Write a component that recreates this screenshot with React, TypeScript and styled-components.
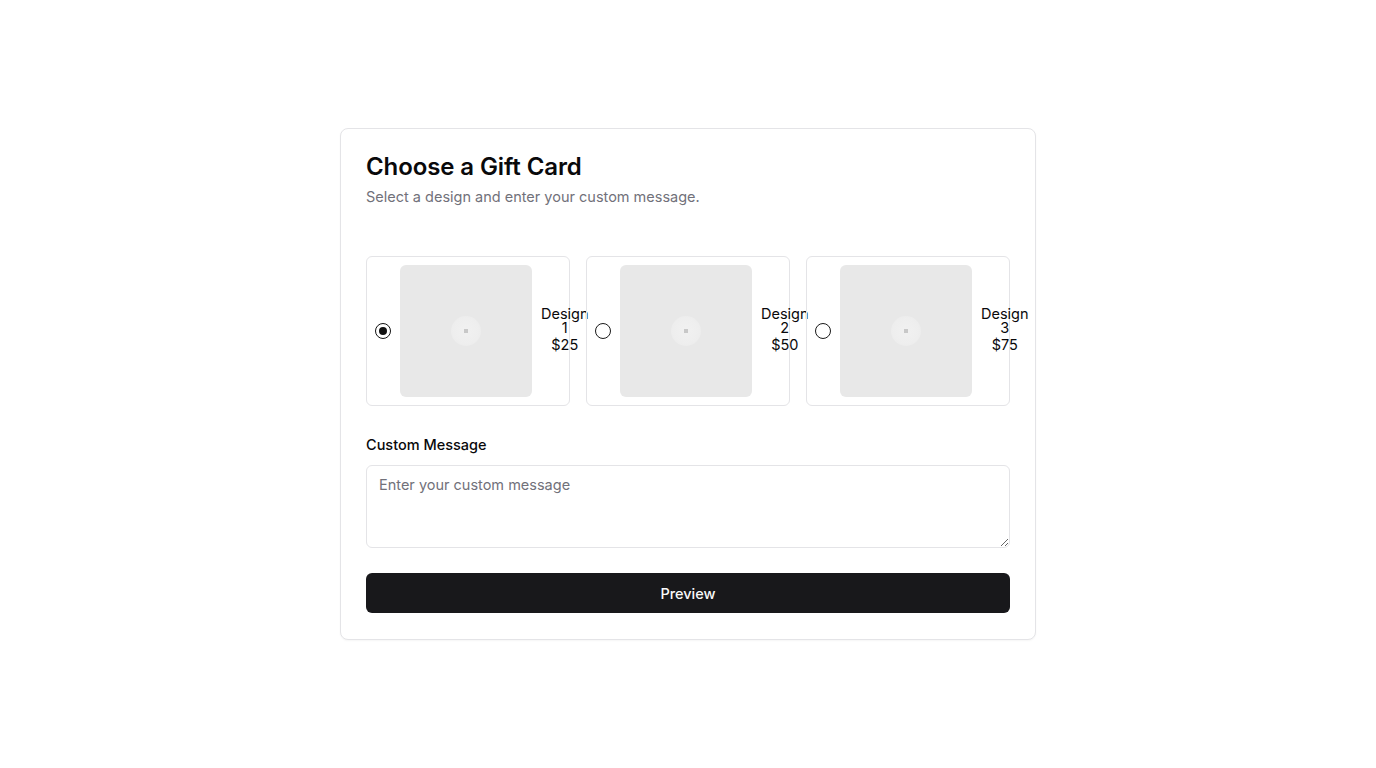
import React, { useState } from "react";
import styled, { createGlobalStyle } from "styled-components";

const GlobalStyle = createGlobalStyle`
  * { box-sizing: border-box; }
  html, body { margin: 0; padding: 0; background: #ffffff; }
  body { font-family: Inter, "Noto Sans", "Liberation Sans", sans-serif; color: #09090b; }
`;

const Page = styled.div`
  min-height: 100vh;
  display: flex;
  align-items: center;
  justify-content: center;
`;

const Card = styled.div`
  width: 696px;
  border: 1px solid #e4e4e7;
  border-radius: 8px;
  background: #fff;
  box-shadow: 0 1px 2px rgba(0, 0, 0, 0.04);
  padding: 26px 25px 26px 25px;
  display: flex;
  flex-direction: column;
`;

const Header = styled.div`
  display: flex;
  flex-direction: column;
  gap: 8px;
  padding-bottom: 49px;
`;

const Title = styled.h2`
  margin: 0;
  font-size: 24px;
  line-height: 24px;
  font-weight: 600;
  letter-spacing: -0.1px;
  color: #09090b;
`;

const Subtitle = styled.p`
  margin: 0;
  font-size: 14.5px;
  line-height: 20px;
  color: #71717a;
`;

const Options = styled.div`
  display: grid;
  grid-template-columns: repeat(3, 1fr);
  gap: 16px;
`;

const Option = styled.label`
  display: flex;
  align-items: center;
  gap: 9px;
  padding: 8px;
  border: 1px solid #e4e4e7;
  border-radius: 6px;
  cursor: pointer;
  min-width: 0;
`;

const Radio = styled.span<{ $checked: boolean }>`
  flex-shrink: 0;
  width: 16px;
  height: 16px;
  border-radius: 50%;
  border: ${(p) => (p.$checked ? "1.5px solid #111" : "1.3px solid #1a1a1a")};
  display: flex;
  align-items: center;
  justify-content: center;
  &::after {
    content: "";
    width: 8px;
    height: 8px;
    border-radius: 50%;
    background: #111;
    display: ${(p) => (p.$checked ? "block" : "none")};
  }
`;

const Thumb = styled.div`
  flex-shrink: 0;
  width: 132px;
  height: 132px;
  border-radius: 6px;
  background: #e8e8e8;
  display: flex;
  align-items: center;
  justify-content: center;
`;

const ThumbGlow = styled.div`
  width: 30px;
  height: 30px;
  border-radius: 50%;
  background: radial-gradient(circle, #f1f1f1 0%, #eeeeee 60%, #e9e9e9 100%);
  display: flex;
  align-items: center;
  justify-content: center;
  &::after {
    content: "";
    width: 4px;
    height: 4px;
    background: #c8c8c8;
  }
`;

const OptionText = styled.div`
  flex-shrink: 1;
  text-align: center;
  color: #09090b;
`;

const OptionName = styled.div`
  font-size: 14.5px;
  line-height: 14px;
  font-weight: 400;
`;

const OptionPrice = styled.div`
  font-size: 14.5px;
  line-height: 20px;
  font-weight: 400;
`;

const Field = styled.div`
  display: flex;
  flex-direction: column;
  gap: 10px;
  margin-top: 29px;
`;

const Label = styled.label`
  font-size: 14.5px;
  line-height: 20px;
  font-weight: 500;
  color: #09090b;
`;

const TextArea = styled.textarea`
  width: 100%;
  height: 83px;
  border: 1px solid #e4e4e7;
  border-radius: 6px;
  padding: 9px 12px;
  font-family: inherit;
  font-size: 14.5px;
  line-height: 20px;
  color: #09090b;
  background: #fff;
  outline: none;
  &::placeholder { color: #71717a; }
`;

const Button = styled.button`
  margin-top: 25px;
  width: 100%;
  height: 40px;
  border: none;
  border-radius: 6px;
  background: #18181b;
  color: #fafafa;
  font-family: inherit;
  font-size: 14.5px;
  font-weight: 500;
  cursor: pointer;
`;

const designs = [
  { id: 1, name: "Design 1", price: "$25" },
  { id: 2, name: "Design 2", price: "$50" },
  { id: 3, name: "Design 3", price: "$75" },
];

export default function App() {
  const [selected, setSelected] = useState(1);
  return (
    <>
      <GlobalStyle />
      <Page>
        <Card>
          <Header>
            <Title>Choose a Gift Card</Title>
            <Subtitle>Select a design and enter your custom message.</Subtitle>
          </Header>
          <Options>
            {designs.map((d) => (
              <Option key={d.id} onClick={() => setSelected(d.id)}>
                <Radio $checked={selected === d.id} />
                <Thumb>
                  <ThumbGlow />
                </Thumb>
                <OptionText>
                  <OptionName>{d.name}</OptionName>
                  <OptionPrice>{d.price}</OptionPrice>
                </OptionText>
              </Option>
            ))}
          </Options>
          <Field>
            <Label htmlFor="msg">Custom Message</Label>
            <TextArea id="msg" placeholder="Enter your custom message" />
          </Field>
          <Button>Preview</Button>
        </Card>
      </Page>
    </>
  );
}
